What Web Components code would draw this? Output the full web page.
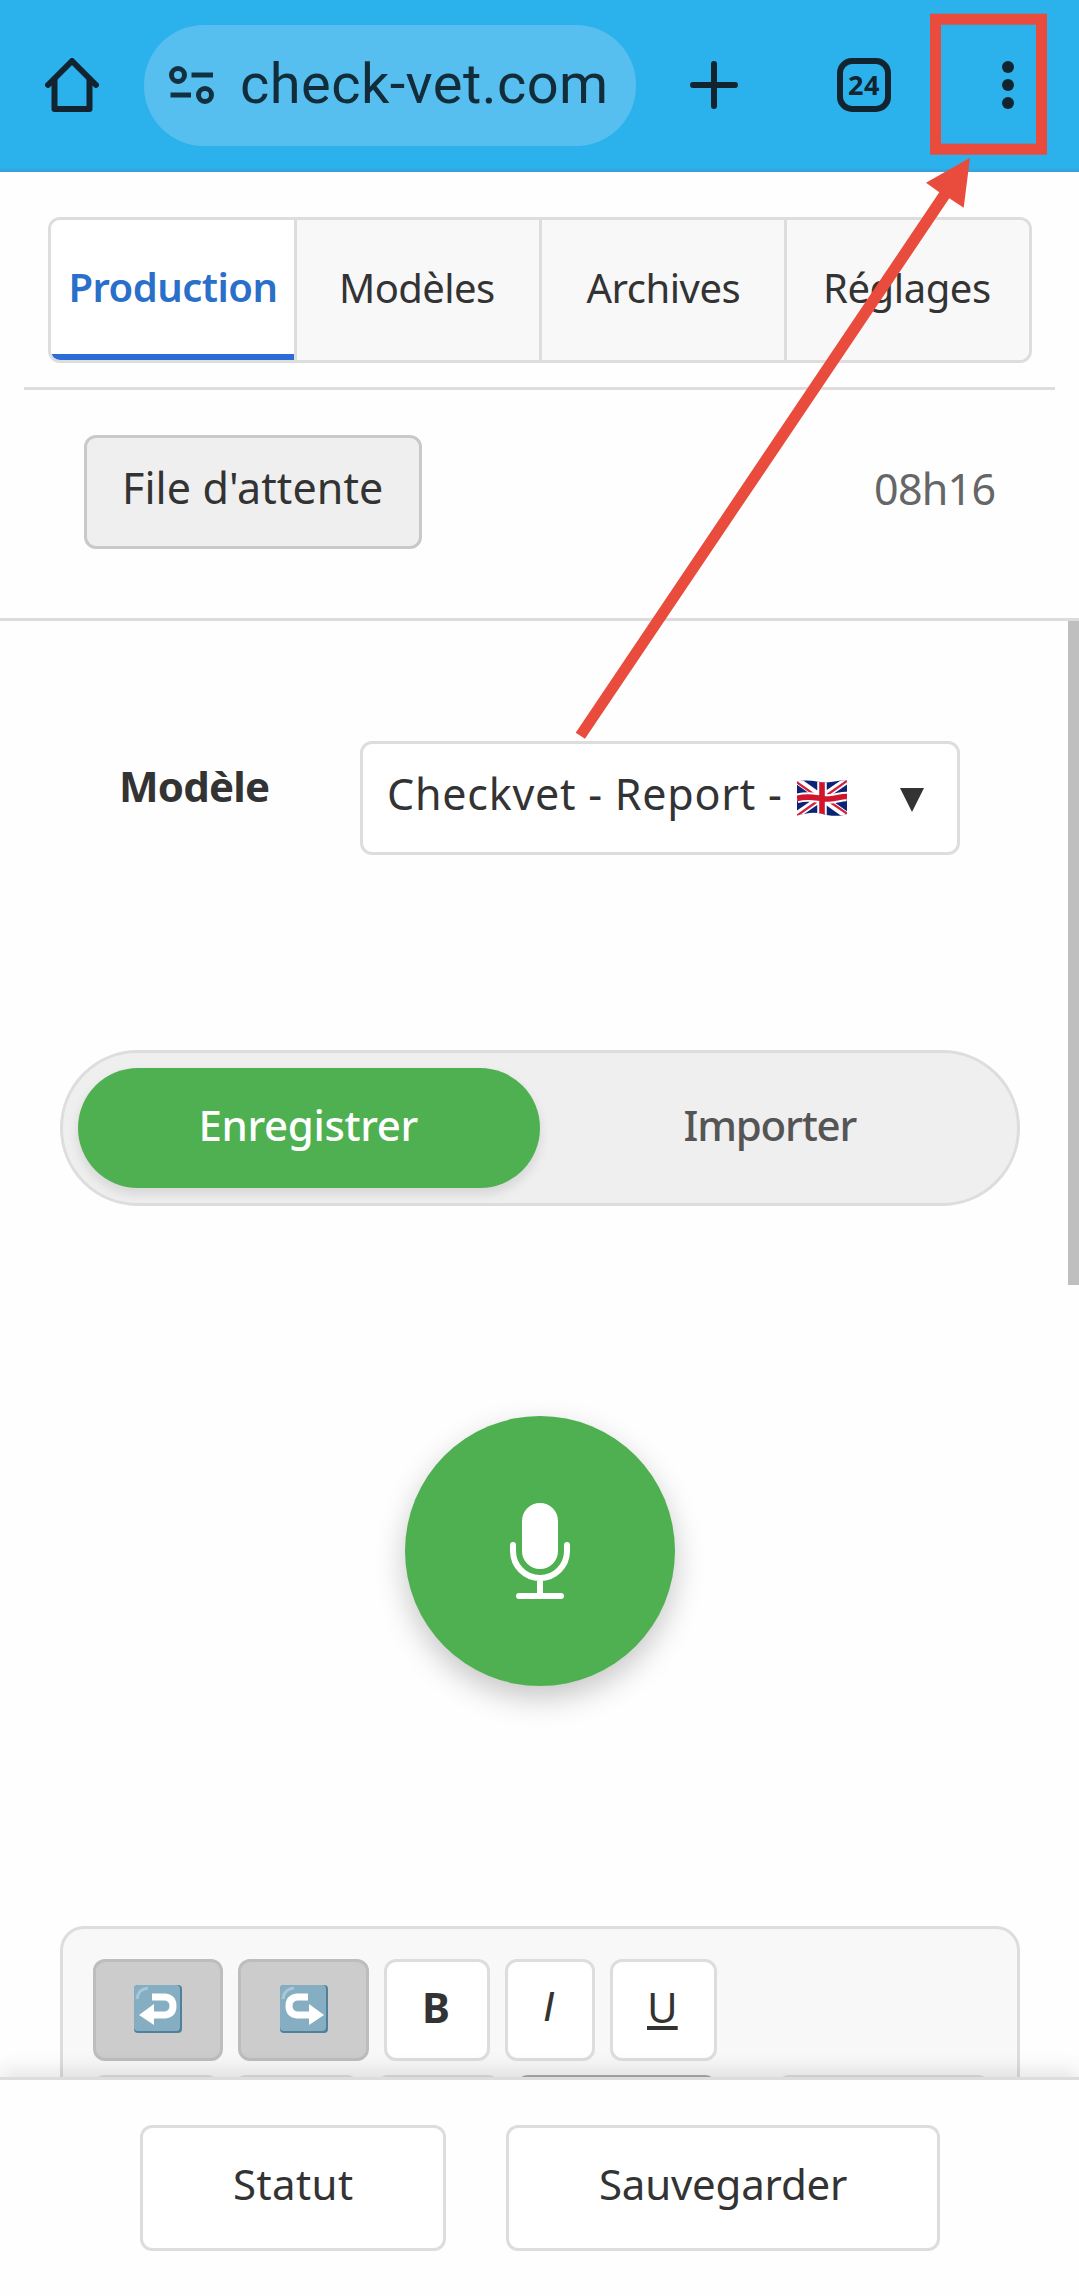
<!DOCTYPE html>
<html lang="fr">
<head>
<meta charset="utf-8">
<title>check-vet.com</title>
<style>
html,body{margin:0;padding:0;background:#fefefe}
body{width:1079px;height:2296px;overflow:hidden;font-family:"Noto Sans","Liberation Sans",sans-serif;color:#333}
</style>
</head>
<body>
<cv-app></cv-app>
<script>
const define = (name, html, setup) => customElements.define(name, class extends HTMLElement {
  constructor(){ super(); this.attachShadow({mode:'open'}).innerHTML = html; }
  connectedCallback(){ if (setup) setup(this); }
});

/* Single-line label whose ink spans exactly the width given by "w". */
const pen = document.createElement('canvas').getContext('2d');
define('fit-label', `<style>:host{display:block;flex:none;white-space:pre;line-height:1.3}span{display:block}</style><span></span>`, el => {
  const text = el.getAttribute('text'), w = +el.getAttribute('w'), size = el.getAttribute('size') || 42;
  const weight = el.getAttribute('weight') || 400, fam = el.getAttribute('font') || 'Noto Sans';
  const style = el.getAttribute('slant') || 'normal', dx = +(el.getAttribute('dx') || 0);
  pen.font = `${style} ${weight} ${size}px "${fam}"`;
  const m = pen.measureText(text);
  const ink = m.actualBoundingBoxLeft + m.actualBoundingBoxRight;
  const ls = text.length > 1 ? (w - ink) / (text.length - 1) : 0;
  const s = el.shadowRoot.querySelector('span');
  s.textContent = text;
  el.style.width = w + 'px';
  s.style.cssText = `font:${style} ${weight} ${size}px/1.3 "${fam}",sans-serif;letter-spacing:${ls}px;margin-left:${m.actualBoundingBoxLeft + dx}px;margin-right:-60px`;
});

define('cv-browser-bar', `<style>
:host{display:flex;align-items:center;height:172px;box-sizing:border-box;background:linear-gradient(#2bb1ec 168px,#3a9fd0 172px);color:#12242f;padding-left:45px;padding-bottom:2px}
svg{display:block;flex:none}
.pill{display:flex;align-items:center;box-sizing:border-box;width:492px;height:121px;border-radius:60px;background:#57bfef;margin-left:45px;padding-left:25px}
.pill fit-label{margin-left:28px;margin-top:-1px;color:#122c3a}
.plus{margin-left:54px}
.tabs{display:flex;align-items:center;justify-content:center;box-sizing:border-box;width:54px;height:54px;border:6px solid #12242f;border-radius:15px;margin-left:99px}
.dots{margin-left:111px}
</style>
<svg width="54" height="54" viewBox="0 0 54 54" fill="none" stroke="#12242f" stroke-width="6" stroke-linecap="round" stroke-linejoin="round"><path d="M3 27 27 3 51 27"/><path d="M9.500 22V51H44.500V22"/></svg>
<div class="pill">
<svg width="45" height="38" viewBox="0 0 45 38" fill="none" stroke="#12303f" stroke-width="5"><circle cx="9" cy="9" r="6.500"/><path d="M22.500 9H44M1.500 29H22"/><circle cx="36" cy="29" r="6.500"/></svg>
<fit-label text="check-vet.com" w="363" size="56" font="Roboto"></fit-label></div>
<svg class="plus" width="48" height="48" viewBox="0 0 48 48" stroke="#12242f" stroke-width="6" stroke-linecap="round"><path d="M24 3V45M3 24H45"/></svg>
<div class="tabs"><fit-label text="24" w="30" size="27" weight="700"></fit-label></div>
<svg class="dots" width="12" height="48" viewBox="0 0 12 48" fill="#12242f"><circle cx="6" cy="6" r="6"/><circle cx="6" cy="24" r="6"/><circle cx="6" cy="42" r="6"/></svg>`);

define('cv-tab', `<style>
:host{display:flex;flex:1;align-items:center;justify-content:center;box-sizing:border-box;background:#f8f8f8;border-left:3px solid #ddd;padding-bottom:5px;color:#333}
:host([active]){flex:0 0 243px;background:#fff;border-left:0;border-bottom:6px solid #2b6cd6;padding-bottom:0;color:#2a6fc9}
</style><slot></slot>`);

define('cv-tabs', `<style>
:host{display:block;padding:45px 24px 0}
.row{display:flex;height:140px;border:3px solid #ddd;border-radius:12px;overflow:hidden;margin:0 23px 24px 24px}
.rule{height:3px;background:#ddd}
</style><div class="row"><slot></slot></div><div class="rule"></div>`);

define('cv-button', `<style>
:host{display:flex;align-items:center;justify-content:center;flex:none;box-sizing:border-box;border:3px solid #ddd;border-radius:12px;background:#fff;color:#333}
</style><slot></slot>`);

define('cv-queue', `<style>
:host{display:flex;justify-content:space-between;align-items:flex-start;height:183px;padding:45px 84.500px 0 84px;border-bottom:3px solid #dcdcdc}
cv-button{width:338px;height:114px;background:#efefef;border-color:#c9c9c9;padding-bottom:8px}
fit-label.time{color:#666;margin-top:26px}
</style><cv-button><fit-label text="File d'attente" w="256" size="43" dx="1"></fit-label></cv-button>
<fit-label class="time" text="08h16" w="118.500" size="43"></fit-label>`);

define('cv-model', `<style>
:host{display:flex;align-items:flex-start;padding:120px 0 0 122px}
.name{margin-top:18px}
.select{display:flex;align-items:center;box-sizing:border-box;width:600px;height:114px;border:3px solid #ddd;border-radius:12px;background:#fff;margin-left:91px;padding:0 0 8px 26px}
svg{display:block;flex:none}
.flag{margin:8px 0 0 16px}.tri{margin:11px 0 0 53px}
</style>
<fit-label class="name" text="Modèle" w="147" size="42" weight="700"></fit-label>
<div class="select"><fit-label text="Checkvet - Report -" w="392" size="43"></fit-label>
<svg class="flag" width="50" height="36" viewBox="0 0 50 36"><clipPath id="c"><path d="M0 1.500C14-2 24 4 34 2C40 1 45-.5 50 .5V34C42 37 32 36 24 33.500C16 31.500 7 33.500 0 35.500Z"/></clipPath>
<g clip-path="url(#c)"><path fill="#0b2475" d="M0-2H50V38H0z"/><path stroke="#fff" stroke-width="7" d="M-2-1 52 37M-2 36 52-1"/><path stroke="#d3213b" stroke-width="2.300" d="M-2 1 20 16.500M30 20 52 35M-2 37 20 21.500M30 15 52-.5"/>
<path d="M25-2V38M0 18.500C14 14.500 22 19.500 32 19C40 18.500 45 16 50 16.500" stroke="#fff" stroke-width="9.500" fill="none"/><path d="M25-2V38M0 18.500C14 14.500 22 19.500 32 19C40 18.500 45 16 50 16.500" stroke="#cf142b" stroke-width="5.600" fill="none"/></g></svg>
<svg class="tri" width="24" height="24" viewBox="0 0 24 24"><path d="M0 0H24L12 24z" fill="#333"/></svg></div>`);

define('cv-toggle', `<style>
:host{display:flex;box-sizing:border-box;width:960px;height:156px;border:3px solid #ddd;border-radius:78px;background:#efefef;margin:195px 0 0 60px;padding:15px}
div{display:flex;flex:1;align-items:center;justify-content:center;height:120px;box-sizing:border-box;border-radius:60px;padding-bottom:6px;color:#555}
.on{background:#4eb050;color:#fff;box-shadow:0 6px 12px rgba(0,0,0,.11)}
</style><div class="on"><fit-label text="Enregistrer" w="217" size="42" weight="500" dx="1"></fit-label></div>
<div><fit-label text="Importer" w="173" size="42" weight="500"></fit-label></div>`);

define('cv-record', `<style>
:host{display:flex;align-items:center;justify-content:center;width:270px;height:270px;border-radius:50%;background:#4eb050;margin:210px 0 0 405px;box-shadow:0 12px 30px rgba(0,0,0,.22)}
svg{margin-bottom:1px}
</style><svg width="60" height="98" viewBox="0 0 60 98" fill="none" stroke="#fff" stroke-width="6" stroke-linecap="round"><rect x="12" y="1" width="36" height="66" rx="18" fill="#fff" stroke="none"/><path d="M3 43V49A27 27 0 0 0 57 49V43M30 76V94M9 94H51"/></svg>`);

define('cv-editor', `<style>
:host{display:block;box-sizing:border-box;width:960px;height:300px;border:3px solid #ddd;border-bottom:0;border-radius:24px 24px 0 0;background:#f8f8f8;margin:240px 0 0 60px;padding:30px 0 0 30px}
.row{display:flex;gap:15px}
.row cv-button{height:102px;padding-bottom:5px}
.row .g{background:#ccc;border-color:#bdbdbd;padding-bottom:2px}
svg{display:block}
.u{text-decoration:underline}
.row.two{gap:0;margin-top:14px}
</style>
<div class="row">
<cv-button class="g" style="width:130px"><svg width="48" height="48" viewBox="0 0 48 48"><rect width="48" height="48" rx="4" fill="#52809a"/><rect width="46" height="46" rx="4" fill="#86aec2"/><path d="M3 14Q4 4 14 3" stroke="#a9c7d6" stroke-width="3" fill="none"/><path d="M18 12H31Q39 13 39 21T31 30H18" stroke="#fff" stroke-width="7" fill="none"/><path d="M20 19V40L5 30z" fill="#fff"/></svg></cv-button>
<cv-button class="g" style="width:131px"><svg width="48" height="48" viewBox="0 0 48 48"><rect width="48" height="48" rx="4" fill="#52809a"/><rect width="46" height="46" rx="4" fill="#86aec2"/><path d="M3 14Q4 4 14 3" stroke="#a9c7d6" stroke-width="3" fill="none"/><path d="M28 12H17Q9 13 9 21T17 30H31" stroke="#fff" stroke-width="7" fill="none"/><path d="M29 19V40L44 30z" fill="#fff"/></svg></cv-button>
<cv-button style="width:106px"><fit-label text="B" w="24" size="42" weight="700"></fit-label></cv-button>
<cv-button style="width:90px"><fit-label text="I" w="10" size="42" slant="italic" font="Liberation Sans" dx="-1"></fit-label></cv-button>
<cv-button style="width:107px"><fit-label class="u" text="U" w="27" size="42"></fit-label></cv-button>
</div>
<div class="row two"><cv-button style="width:126px"></cv-button><cv-button style="width:125px;margin-left:15px"></cv-button><cv-button style="width:124px;margin-left:17px"></cv-button><cv-button style="width:201px;margin-left:16px;border-color:#aaa"></cv-button><cv-button style="width:213px;margin-left:60px"></cv-button></div>`);

define('cv-content', `<style>
:host{display:flex;height:1456px;overflow:hidden}
.page{flex:1}
.bar{width:11px;height:664px;background:#bfbfbf}
</style><div class="page"><cv-model></cv-model><cv-toggle></cv-toggle><cv-record></cv-record><cv-editor></cv-editor></div><div class="bar"></div>`);

define('cv-footer', `<style>
:host{display:flex;position:relative;box-sizing:border-box;height:219px;background:#fefefe;border-top:3px solid #ddd;padding:45px 0 0 140px;gap:60px;box-shadow:0 -6px 20px rgba(0,0,0,.11)}
cv-button{height:126px;padding-bottom:7px}
</style><cv-button style="width:306px"><fit-label text="Statut" w="118" size="42" dx="1"></fit-label></cv-button>
<cv-button style="width:434px"><fit-label text="Sauvegarder" w="246" size="42" dx="1"></fit-label></cv-button>`);

/* Annotation drawn over the page: highlighted menu and arrow. */
define('cv-callout', `<style>:host{position:absolute;left:0;top:0;width:1079px;height:760px;pointer-events:none}</style>
<svg width="1079" height="760" viewBox="0 0 1079 760"><rect x="935.500" y="19.200" width="106" height="130" fill="none" stroke="#e94c3d" stroke-width="11"/><path fill="#e94c3d" d="M970 157.700 926 182.700 939.300 192.300 575.700 732.700 585 738.700 949.300 198.300 963.700 207.700Z"/></svg>`);

define('cv-app', `<style>:host{display:block;position:relative;width:1079px;height:2296px;overflow:hidden;background:#fefefe}</style>
<cv-browser-bar></cv-browser-bar>
<cv-tabs><cv-tab active><fit-label text="Production" w="204" size="40" weight="600" dx="1"></fit-label></cv-tab><cv-tab><fit-label text="Modèles" w="152" size="40"></fit-label></cv-tab><cv-tab><fit-label text="Archives" w="153" size="40"></fit-label></cv-tab><cv-tab><fit-label text="Réglages" w="164" size="40"></fit-label></cv-tab></cv-tabs>
<cv-queue></cv-queue>
<cv-content></cv-content>
<cv-footer></cv-footer>
<cv-callout></cv-callout>`);
</script>
</body>
</html>
